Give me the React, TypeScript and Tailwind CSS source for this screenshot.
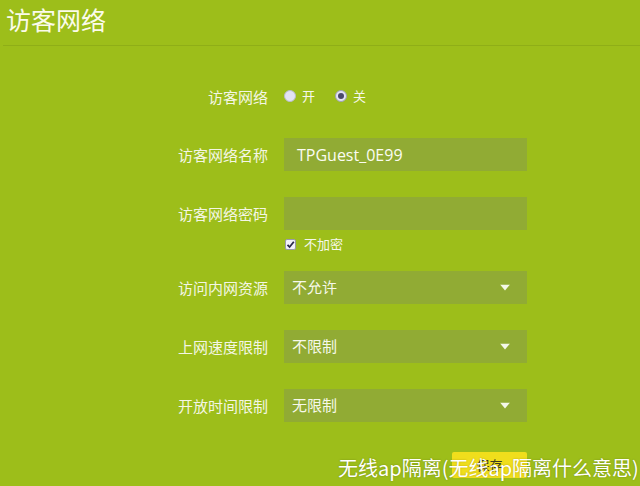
import React from "react";

const font = { fontFamily: '"Microsoft YaHei", "Noto Sans CJK SC", "Noto Sans", sans-serif' };

function Label({ children }: { children: React.ReactNode }) {
  return (
    <div className="w-[268px] text-right text-[15px] text-[#f4f6e4] shrink-0 leading-none">{children}</div>
  );
}

function Arrow() {
  return (
    <svg width="10" height="7" viewBox="0 0 10 7" className="absolute right-[17px] top-1/2 -translate-y-1/2">
      <path d="M0 0 L10 0 L5 6 Z" fill="#f4f8e8" />
    </svg>
  );
}

function SelectRow({ label, value, mt }: { label: string; value: string; mt: string }) {
  return (
    <div className={`flex items-center ${mt}`}>
      <Label>{label}</Label>
      <div className="ml-[16px] relative w-[243px] h-[33px] bg-[#91ab34] flex items-center pl-[8px] text-[15px] text-[#f6f8ea]">
        {value}
        <Arrow />
      </div>
    </div>
  );
}

export default function App() {
  return (
    <div className="relative w-[640px] h-[486px] bg-[#9dbe1a] overflow-hidden" style={font}>
      <div className="h-[46px] border-b border-[#8fae17] ml-[3px] flex items-start">
        <div className="text-[25px] leading-none text-[#fbfbea] pt-[7px] pl-[3px]">访客网络</div>
      </div>

      <div className="flex items-center mt-[40px] h-[20px]">
        <Label>访客网络</Label>
        <div className="ml-[16px] flex items-center text-[13px] text-[#f6f8ea]">
          <span className="w-[12px] h-[12px] rounded-full bg-[#e2e2f4] border border-[#b9bccb]" />
          <span className="ml-[6px]">开</span>
          <span className="ml-[20px] w-[12px] h-[12px] rounded-full bg-[#e2e2f4] border border-[#9fa2b3] flex items-center justify-center">
            <span className="w-[6px] h-[6px] rounded-full bg-[#4a4a6a]" />
          </span>
          <span className="ml-[6px]">关</span>
        </div>
      </div>

      <div className="flex items-center mt-[32px]">
        <Label>访客网络名称</Label>
        <div className="ml-[16px] w-[243px] h-[33px] bg-[#91ab34] flex items-center pl-[13px] text-[16px] text-[#fbfcf2]" style={{ fontFamily: '"Open Sans", "Noto Sans", sans-serif' }}>
          TPGuest_0E99
        </div>
      </div>

      <div className="flex items-center mt-[26px]">
        <Label>访客网络密码</Label>
        <div className="ml-[16px] w-[243px] h-[33px] bg-[#91ab34]" />
      </div>

      <div className="flex items-center mt-[6px] h-[16px]">
        <div className="w-[268px] shrink-0" />
        <div className="ml-[17px] flex items-center text-[13px] text-[#f6f8ea]">
          <span className="w-[11px] h-[11px] bg-[#f2f2f8] rounded-[2px] border border-[#9a9aa8] flex items-center justify-center">
            <svg width="9" height="9" viewBox="0 0 9 9">
              <path d="M1.5 4.8 L3.6 7 L7.8 1.8" stroke="#2a2a4a" strokeWidth="1.8" fill="none" />
            </svg>
          </span>
          <span className="ml-[8px]">不加密</span>
        </div>
      </div>

      <SelectRow label="访问内网资源" value="不允许" mt="mt-[19px]" />
      <SelectRow label="上网速度限制" value="不限制" mt="mt-[26px]" />
      <SelectRow label="开放时间限制" value="无限制" mt="mt-[26px]" />

      <div className="flex mt-[30px]">
        <div className="ml-[452px] w-[75px] h-[26px] bg-[#f0de1c] rounded-[2px] flex items-center justify-center text-[13px] text-[#3a3a20]">
          保存
        </div>
      </div>

      <div className="absolute left-[338px] top-[454px] text-[20px] leading-[28px] text-white whitespace-nowrap" style={{ textShadow: "0 0 2px rgba(0,0,0,0.25)" }}>
        无线ap隔离(无线ap隔离什么意思)
      </div>
    </div>
  );
}
